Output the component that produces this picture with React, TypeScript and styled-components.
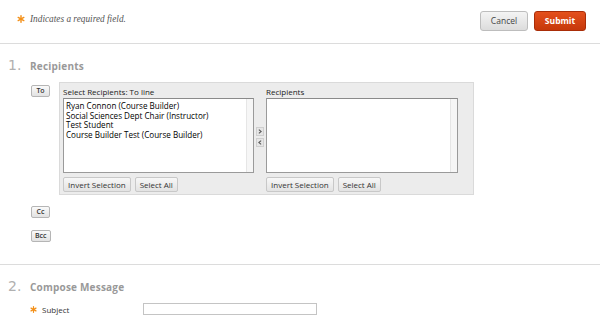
import React from 'react'
import styled, { createGlobalStyle } from 'styled-components'

const GlobalStyle = createGlobalStyle`
  html, body {
    margin: 0;
    padding: 0;
    background: #fff;
  }
  body {
    font-family: 'Open Sans', 'DejaVu Sans', sans-serif;
    color: #333;
  }
`

const Page = styled.div`
  width: 600px;
  height: 325px;
  overflow: hidden;
`

const TopBar = styled.div`
  height: 44px;
  box-sizing: border-box;
  display: flex;
  align-items: center;
  justify-content: space-between;
  padding: 0 14px 0 17px;
  border-bottom: 1px solid #dcdcdc;
`

const RequiredNote = styled.div`
  display: flex;
  align-items: center;
  gap: 5px;
  font-family: 'Liberation Serif', 'DejaVu Serif', serif;
  font-style: italic;
  font-size: 9.3px;
  color: #555;
  margin-top: -6px;
`

const Actions = styled.div`
  display: flex;
  gap: 6px;
  margin-top: -2px;
`

const ActionButton = styled.button<{ primary?: boolean }>`
  height: 20px;
  border-radius: 3px;
  font-family: 'Open Sans', 'DejaVu Sans', sans-serif;
  font-size: 8.5px;
  padding: 0;
  cursor: pointer;
  ${p => p.primary ? `
    width: 52px;
    font-weight: bold;
    color: #fff;
    border: 1px solid #a92d08;
    background: linear-gradient(#e4501c, #c6380b);
  ` : `
    width: 48px;
    color: #444;
    border: 1px solid #bdbdbd;
    background: linear-gradient(#f4f4f4, #dcdcdc);
  `}
`

const Section = styled.div<{ divided?: boolean; h?: number }>`
  padding: 13px 0 0 0;
  box-sizing: border-box;
  ${p => p.h ? `height: ${p.h}px;` : ''}
  ${p => p.divided ? 'border-bottom: 1px solid #dcdcdc;' : ''}
`

const SectionTitle = styled.div`
  display: flex;
  align-items: baseline;
  padding-left: 8px;
  height: 16px;
  color: #999;
`

const StepNumber = styled.span`
  font-family: 'DejaVu Sans', sans-serif;
  font-size: 14px;
  color: #b0b0b0;
  width: 22px;
`

const StepName = styled.span`
  font-size: 10px;
  font-weight: bold;
  color: #999;
  letter-spacing: 0.2px;
`

const FieldRow = styled.div<{ top: number }>`
  display: flex;
  align-items: flex-start;
  gap: 9px;
  padding-left: 31px;
  margin-top: ${p => p.top}px;
`

const SmallButton = styled.button`
  height: 10px;
  box-sizing: content-box;
  padding: 0 3px;
  min-width: 11px;
  border: 1px solid #b5b5b5;
  border-radius: 2px;
  background: linear-gradient(#fafafa, #e2e2e2);
  font-family: 'Open Sans', 'DejaVu Sans', sans-serif;
  font-size: 7px;
  font-weight: 600;
  line-height: 10px;
  color: #333;
  margin-top: 3px;
`

const Panel = styled.div`
  width: 415px;
  height: 113px;
  box-sizing: border-box;
  background: #ececec;
  border: 1px solid #dadada;
  padding: 4px 0 0 3px;
  display: grid;
  grid-template-columns: 191px 12px 192px;
`

const Column = styled.div`
  display: flex;
  flex-direction: column;
`

const ColumnLabel = styled.div`
  font-size: 8px;
  color: #222;
  height: 11px;
  line-height: 10px;
`

const ListBox = styled.div`
  height: 75px;
  box-sizing: border-box;
  background: #fff;
  border: 1px solid #9a9a9a;
  border-top-color: #8a8a8a;
  display: flex;
`

const ListItems = styled.div`
  flex: 1;
  padding: 2px 2px;
`

const ListItem = styled.div`
  font-size: 8.1px;
  line-height: 9.7px;
  color: #000;
`

const Track = styled.div`
  width: 6px;
  background: #f6f6f6;
  border-left: 1px solid #e6e6e6;
`

const ButtonRow = styled.div`
  display: flex;
  gap: 4px;
  margin-top: 4px;
`

const PanelButton = styled.button`
  height: 15px;
  padding: 0 4px;
  border: 1px solid #c8c8c8;
  border-radius: 2px;
  background: linear-gradient(#f7f7f7, #e3e3e3);
  font-family: 'Open Sans', 'DejaVu Sans', sans-serif;
  font-size: 8px;
  color: #333;
`

const ArrowColumn = styled.div`
  display: flex;
  flex-direction: column;
  align-items: center;
  gap: 2px;
  padding-top: 40px;
`

const ArrowButton = styled.button`
  width: 8px;
  height: 9px;
  padding: 0;
  border: 1px solid #cfcfcf;
  background: #e6e6e6;
  display: flex;
  align-items: center;
  justify-content: center;
`

const SubjectRow = styled.div`
  display: grid;
  grid-template-columns: 113px 174px;
  align-items: center;
  padding-left: 30px;
  margin-top: 9px;
`

const SubjectLabel = styled.div`
  display: flex;
  align-items: center;
  gap: 5px;
  font-size: 8px;
  color: #333;
`

const TextInput = styled.div`
  height: 10px;
  border: 1px solid #c4c4c4;
  background: #fff;
`

function Asterisk({ size = 7 }: { size?: number }) {
  return (
    <svg width={size} height={size} viewBox="0 0 10 10">
      <g stroke="#f39019" strokeWidth="1.8" strokeLinecap="round">
        <line x1="5" y1="1" x2="5" y2="9" />
        <line x1="1.5" y1="3" x2="8.5" y2="7" />
        <line x1="1.5" y1="7" x2="8.5" y2="3" />
      </g>
    </svg>
  )
}

function Chevron({ dir }: { dir: 'left' | 'right' }) {
  const d = dir === 'right' ? 'M2 1.5 L4.5 3.5 L2 5.5' : 'M4.5 1.5 L2 3.5 L4.5 5.5'
  return (
    <svg width="6" height="7" viewBox="0 0 6.5 7">
      <path d={d} fill="none" stroke="#555" strokeWidth="1.1" />
    </svg>
  )
}

const people = [
  'Ryan Connon (Course Builder)',
  'Social Sciences Dept Chair (Instructor)',
  'Test Student',
  'Course Builder Test (Course Builder)',
]

function Picker({ label, items }: { label: string; items: string[] }) {
  return (
    <Column>
      <ColumnLabel>{label}</ColumnLabel>
      <ListBox>
        <ListItems>
          {items.map(p => <ListItem key={p}>{p}</ListItem>)}
        </ListItems>
        <Track />
      </ListBox>
      <ButtonRow>
        <PanelButton>Invert Selection</PanelButton>
        <PanelButton>Select All</PanelButton>
      </ButtonRow>
    </Column>
  )
}

export default function App() {
  return (
    <Page>
      <GlobalStyle />
      <TopBar>
        <RequiredNote>
          <Asterisk size={8} />
          Indicates a required field.
        </RequiredNote>
        <Actions>
          <ActionButton>Cancel</ActionButton>
          <ActionButton primary>Submit</ActionButton>
        </Actions>
      </TopBar>

      <Section divided h={221}>
        <SectionTitle>
          <StepNumber>1.</StepNumber>
          <StepName>Recipients</StepName>
        </SectionTitle>
        <FieldRow top={9}>
          <SmallButton>To</SmallButton>
          <Panel>
            <Picker label="Select Recipients: To line" items={people} />
            <ArrowColumn>
              <ArrowButton><Chevron dir="right" /></ArrowButton>
              <ArrowButton><Chevron dir="left" /></ArrowButton>
            </ArrowColumn>
            <Picker label="Recipients" items={[]} />
          </Panel>
        </FieldRow>
        <FieldRow top={8}>
          <SmallButton>Cc</SmallButton>
        </FieldRow>
        <FieldRow top={9}>
          <SmallButton>Bcc</SmallButton>
        </FieldRow>
      </Section>

      <Section>
        <SectionTitle>
          <StepNumber>2.</StepNumber>
          <StepName>Compose Message</StepName>
        </SectionTitle>
        <SubjectRow>
          <SubjectLabel>
            <Asterisk size={7} />
            Subject
          </SubjectLabel>
          <TextInput />
        </SubjectRow>
      </Section>
    </Page>
  )
}
